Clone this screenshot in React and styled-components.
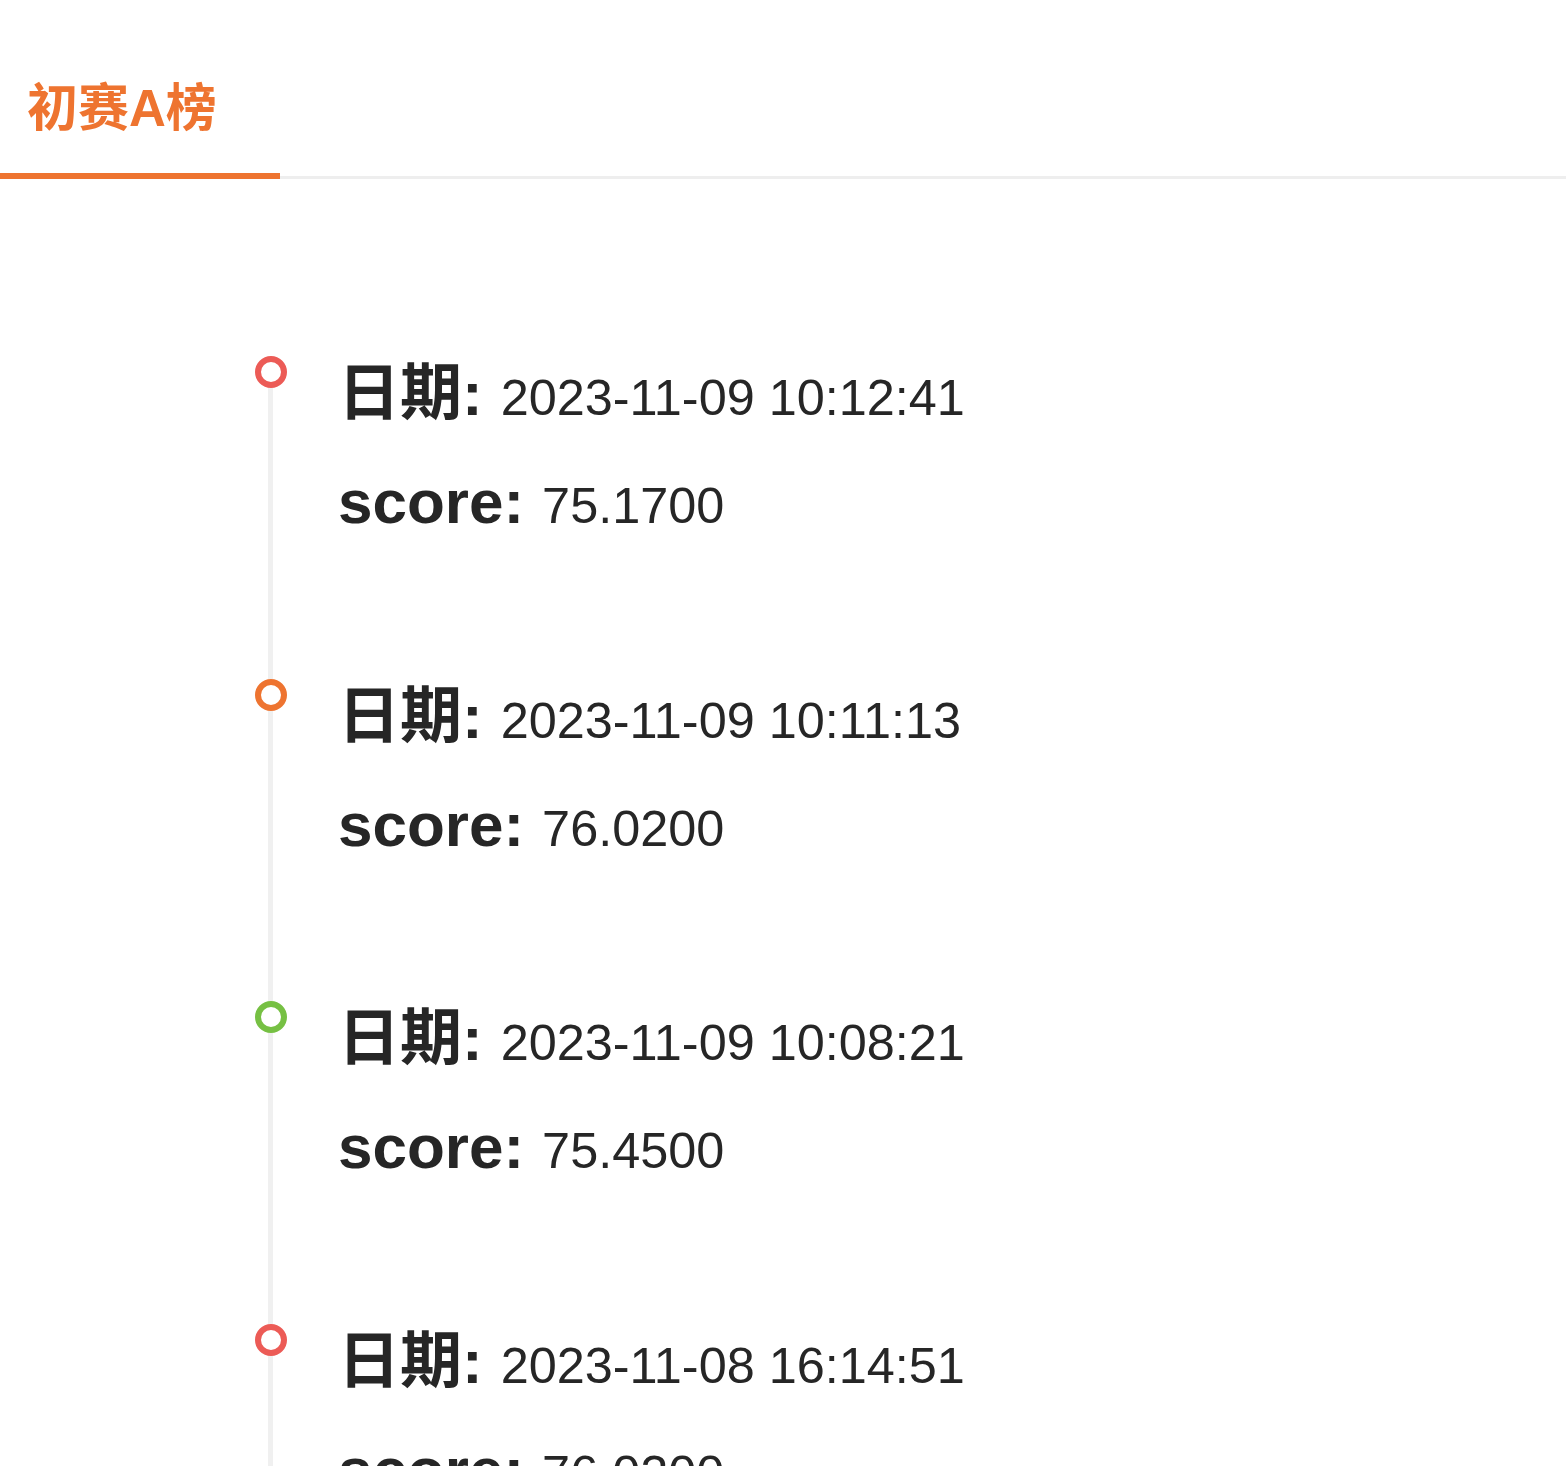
import React from 'react'
import styled, { createGlobalStyle } from 'styled-components'

const records = [
  { date: '2023-11-09 10:12:41', score: '75.1700', color: '#ec5b56' },
  { date: '2023-11-09 10:11:13', score: '76.0200', color: '#ee7430' },
  { date: '2023-11-09 10:08:21', score: '75.4500', color: '#76c043' },
  { date: '2023-11-08 16:14:51', score: '76.0200', color: '#ec5b56' },
]

const App = () => {
  return (
    <>
      <GlobalStyle />
      <Page>
        <TabBar>
          <Tab $active>初赛A榜</Tab>
        </TabBar>
        <Timeline>
          {records.map((r, i) => (
            <Item key={i}>
              <Node $color={r.color} />
              <Content>
                <Row>
                  <Label>日期:</Label> {r.date}
                </Row>
                <Row>
                  <Label>score:</Label> {r.score}
                </Row>
              </Content>
            </Item>
          ))}
        </Timeline>
      </Page>
    </>
  )
}

const GlobalStyle = createGlobalStyle`
  html, body {
    margin: 0;
    padding: 0;
    background: #fff;
    overflow: hidden;
  }
  body {
    font-family: 'Liberation Sans', Arial, 'Noto Sans CJK SC', sans-serif;
    color: #262626;
  }
`

const Page = styled.div`
  min-height: 100vh;
`

const TabBar = styled.div`
  display: flex;
  border-bottom: 3px solid #eeeeee;
`

const Tab = styled.div`
  box-sizing: border-box;
  width: 280px;
  padding: 83px 0 38px 27px;
  margin-bottom: -3px;
  font-size: 51px;
  line-height: 52px;
  font-weight: bold;
  color: ${({ $active }) => ($active ? '#ee7430' : '#333')};
  border-bottom: 6px solid ${({ $active }) => ($active ? '#ee7430' : 'transparent')};
`

const Timeline = styled.ul`
  list-style: none;
  margin: 0;
  padding: 177px 0 0 255px;
`

const Item = styled.li`
  position: relative;
  display: grid;
  grid-template-columns: 32px 1fr;
  column-gap: 51px;
  align-items: start;

  &::before {
    content: '';
    position: absolute;
    left: 13px;
    top: 16px;
    bottom: 0;
    width: 5px;
    background: #f0f0f0;
  }
`

const Node = styled.span`
  position: relative;
  z-index: 1;
  box-sizing: border-box;
  width: 32px;
  height: 32px;
  border-radius: 50%;
  background: #fff;
  border: 6px solid ${({ $color }) => $color};
`

const Content = styled.div`
  padding: 3px 0 137.5px;
  display: flex;
  flex-direction: column;
  gap: 34px;
`

const Row = styled.div`
  font-size: 50.4px;
  line-height: 70px;
  white-space: nowrap;
`

const Label = styled.b`
  font-size: 62px;
  font-weight: bold;
  margin-right: 4px;
`

export default App
